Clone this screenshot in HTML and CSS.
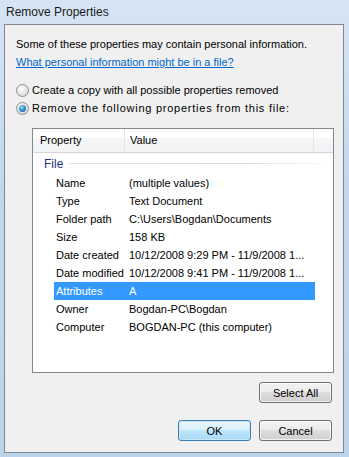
FILE: index.html
```html
<!DOCTYPE html>
<html lang="en">

<head>
    <meta charset="UTF-8">
    <meta name="viewport" content="width=device-width, initial-scale=1.0">
    <title>Remove Properties</title>
    <link rel="stylesheet" href="styles.css">
</head>

<body>
    <div class="window">
        <div class="titleBar">Remove Properties</div>

        <div class="panel">
            <p class="intro">Some of these properties may contain personal information.</p>
            <a class="helpLink" href="#">What personal information might be in a file?</a>

            <div class="choices">
                <label class="choice">
                    <span class="radio"></span>
                    <span>Create a copy with all possible properties removed</span>
                </label>
                <label class="choice">
                    <span class="radio checked"></span>
                    <span class="wide">Remove the following properties from this file:</span>
                </label>
            </div>

            <div class="listView">
                <div class="listHeader">
                    <div class="col colName">Property</div>
                    <div class="col colValue">Value</div>
                    <div class="col colRest"></div>
                </div>
                <div class="group">
                    <span class="groupName">File</span>
                    <span class="groupLine"></span>
                </div>
                <div class="rows">
                    <div class="row"><span class="cellName">Name</span><span class="cellValue">(multiple values)</span></div>
                    <div class="row"><span class="cellName">Type</span><span class="cellValue">Text Document</span></div>
                    <div class="row"><span class="cellName">Folder path</span><span class="cellValue">C:\Users\Bogdan\Documents</span></div>
                    <div class="row"><span class="cellName">Size</span><span class="cellValue">158 KB</span></div>
                    <div class="row"><span class="cellName">Date created</span><span class="cellValue">10/12/2008 9:29 PM - 11/9/2008 1...</span></div>
                    <div class="row"><span class="cellName">Date modified</span><span class="cellValue">10/12/2008 9:41 PM - 11/9/2008 1...</span></div>
                    <div class="row selected"><span class="cellName">Attributes</span><span class="cellValue">A</span></div>
                    <div class="row"><span class="cellName">Owner</span><span class="cellValue">Bogdan-PC\Bogdan</span></div>
                    <div class="row"><span class="cellName">Computer</span><span class="cellValue">BOGDAN-PC (this computer)</span></div>
                </div>
            </div>

            <div class="selectRow">
                <button class="btn">Select All</button>
            </div>

            <div class="footer">
                <button class="btn default">OK</button>
                <button class="btn">Cancel</button>
            </div>
        </div>
    </div>
</body>

</html>
```

FILE: styles.css
```css
* {
    box-sizing: border-box;
}

body {
    margin: 0;
    font-family: "Liberation Sans", Arial, sans-serif;
    font-size: 11px;
    color: #000;
}

.window {
    width: 349px;
    height: 457px;
    display: flex;
    flex-direction: column;
    padding: 0 5px 4px 4px;
    background: linear-gradient(180deg, #d6e5f5 0%, #c3d8ee 40%, #bcd3ec 100%);
}

.titleBar {
    height: 24px;
    line-height: 24px;
    padding-left: 2px;
    font-size: 12px;
    color: #1a1a1a;
}

.panel {
    flex: 1;
    display: flex;
    flex-direction: column;
    background: #f0f0f0;
    border: 1px solid #7d8894;
    padding: 12px 0 0 11px;
}

.intro {
    margin: 0;
    line-height: 15px;
    height: 15px;
    white-space: nowrap;
}

.helpLink {
    margin-top: 3px;
    line-height: 15px;
    color: #0066cc;
    text-decoration: underline;
    align-self: flex-start;
}

.choices {
    margin-top: 13px;
    display: flex;
    flex-direction: column;
    gap: 3px;
}

.choice {
    display: flex;
    align-items: center;
    gap: 3px;
    height: 15px;
    line-height: 15px;
    white-space: nowrap;
}

.wide {
    letter-spacing: 0.75px;
}

.radio {
    width: 13px;
    height: 13px;
    border-radius: 50%;
    border: 1px solid #8e8f8f;
    background: radial-gradient(circle at 40% 35%, #ffffff 0%, #e6e6e6 50%, #cfcfcf 100%);
    display: flex;
    align-items: center;
    justify-content: center;
}

.radio.checked::after {
    content: "";
    width: 7px;
    height: 7px;
    border-radius: 50%;
    background: radial-gradient(circle at 40% 35%, #9fdcf7 0%, #2c8fd0 50%, #0d4f8a 100%);
}

.listView {
    margin: 12px 0 0 16px;
    width: 302px;
    height: 245px;
    background: #fff;
    border: 1px solid #828790;
}

.listHeader {
    display: flex;
    height: 24px;
    border-bottom: 1px solid #d5d5d5;
    background: linear-gradient(180deg, #ffffff 0%, #ffffff 40%, #f5f6f7 41%, #f1f2f4 100%);
}

.col {
    height: 23px;
    line-height: 23px;
    border-right: 1px solid #e3e5e8;
}

.colName {
    width: 92px;
    padding-left: 7px;
}

.colValue {
    width: 189px;
    padding-left: 5px;
}

.colRest {
    flex: 1;
    border-right: none;
}

.group {
    display: flex;
    align-items: center;
    height: 21px;
    padding: 0 11px 0 11px;
    gap: 6px;
}

.groupName {
    color: #1e3287;
    font-size: 12px;
}

.groupLine {
    flex: 1;
    height: 1px;
    background: linear-gradient(90deg, #e2e4ea 0%, #d9dde6 70%, #f7f8fa 100%);
}

.rows {
    padding-left: 21px;
}

.row {
    display: flex;
    height: 18px;
    line-height: 18px;
    width: 261px;
}

.cellName {
    width: 75px;
    padding-left: 2px;
    white-space: nowrap;
}

.cellValue {
    white-space: nowrap;
}

.row.selected {
    background: #3399ff;
    color: #fff;
}

.selectRow {
    display: flex;
    justify-content: flex-end;
    padding-right: 11px;
    margin-top: 9px;
}

.footer {
    display: flex;
    justify-content: flex-end;
    gap: 8px;
    padding-right: 11px;
    margin-top: 17px;
}

.btn {
    width: 73px;
    height: 21px;
    font-family: inherit;
    font-size: 11px;
    color: #000;
    border: 1px solid #707070;
    border-radius: 3px;
    background: linear-gradient(180deg, #f2f2f2 0%, #ebebeb 48%, #dddddd 50%, #cfcfcf 100%);
    box-shadow: inset 0 0 0 1px rgba(255, 255, 255, 0.7);
    padding: 0;
}

.btn.default {
    border-color: #3c7fb1;
    background: linear-gradient(180deg, #eaf6fd 0%, #d9f0fc 48%, #bee6fd 50%, #a7d9f5 100%);
    box-shadow: inset 0 0 0 1px #cbe6f6;
}
```
